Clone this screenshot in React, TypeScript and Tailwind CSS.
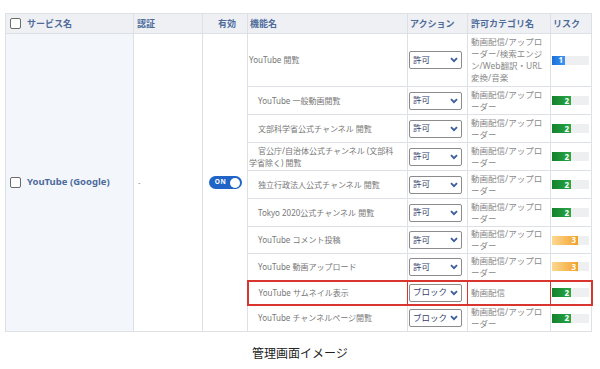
import React from "react";

type Row = {
  name: React.ReactNode;
  indent: boolean;
  cat: string[];
  action: string;
  risk: 1 | 2 | 3;
  h: string;
  hl?: boolean;
};

const rows: Row[] = [
  { name: "YouTube 閲覧", indent: false, cat: ["動画配信/アップロ", "ーダー/検索エンジ", "ン/Web翻訳・URL", "変換/音楽"], action: "許可", risk: 1, h: "h-[53px]" },
  { name: "YouTube 一般動画閲覧", indent: true, cat: ["動画配信/アップロ", "ーダー"], action: "許可", risk: 2, h: "h-[28px]" },
  { name: "文部科学省公式チャンネル 閲覧", indent: true, cat: ["動画配信/アップロ", "ーダー"], action: "許可", risk: 2, h: "h-[28px]" },
  {
    name: (
      <>
        官公庁/自治体公式チャンネル (文部科
        <br />
        学省除く) 閲覧
      </>
    ),
    indent: true,
    cat: ["動画配信/アップロ", "ーダー"],
    action: "許可",
    risk: 2,
    h: "h-[28px]",
  },
  { name: "独立行政法人公式チャンネル 閲覧", indent: true, cat: ["動画配信/アップロ", "ーダー"], action: "許可", risk: 2, h: "h-[28px]" },
  { name: "Tokyo 2020公式チャンネル 閲覧", indent: true, cat: ["動画配信/アップロ", "ーダー"], action: "許可", risk: 2, h: "h-[28px]" },
  { name: "YouTube コメント投稿", indent: true, cat: ["動画配信/アップロ", "ーダー"], action: "許可", risk: 3, h: "h-[27px]" },
  { name: "YouTube 動画アップロード", indent: true, cat: ["動画配信/アップロ", "ーダー"], action: "許可", risk: 3, h: "h-[27px]" },
  { name: "YouTube サムネイル表示", indent: true, cat: ["動画配信"], action: "ブロック", risk: 2, h: "h-[24px]", hl: true },
  { name: "YouTube チャンネルページ閲覧", indent: true, cat: ["動画配信/アップロ", "ーダー"], action: "ブロック", risk: 2, h: "h-[27px]" },
];

function Checkbox() {
  return <span className="inline-block w-[11px] h-[11px] border border-[#6b6b6b] rounded-[2px] bg-white align-middle shrink-0" />;
}

function Select({ value }: { value: string }) {
  return (
    <div className="flex items-center justify-between w-[53px] h-[18px] border border-[#8c8c8c] rounded-[2px] bg-white pl-[3px] pr-[3px]">
      <span className="text-[8.5px] text-[#33406b] leading-none whitespace-nowrap">{value}</span>
      <svg width="8" height="6" viewBox="0 0 8 6" className="shrink-0">
        <path d="M1 1.2 L4 4.2 L7 1.2" fill="none" stroke="#3c5a9c" strokeWidth="1.8" />
      </svg>
    </div>
  );
}

function Risk({ level }: { level: 1 | 2 | 3 }) {
  const bar =
    level === 1
      ? "w-[13px] bg-linear-to-r from-[#1b6fd9] to-[#3d95f0]"
      : level === 2
      ? "w-[19px] bg-linear-to-r from-[#12822b] to-[#2aa748]"
      : "w-[26px] bg-linear-to-r from-[#fcd88e] to-[#f2a11c]";
  return (
    <div className="w-[37px] h-[9px] bg-[#eeeff1] flex">
      <div className={`${bar} h-full flex items-center justify-end pr-[2px]`}>
        <span className="text-[8px] font-bold text-white leading-none">{level}</span>
      </div>
    </div>
  );
}

export default function App() {
  const cell = "border border-[#dde0e5]";
  const head = "border border-[#dde0e5] bg-[#eef0f3] text-[9px] font-bold text-[#4e6b9b] h-[20px] align-middle";
  return (
    <div className="w-[600px] h-[369px] bg-white pt-[13px] px-[5px]" style={{ fontFamily: '"Noto Sans", "Noto Sans CJK JP", sans-serif' }}>
      <table className="table-fixed border-collapse w-[586px]">
        <colgroup>
          <col className="w-[128px]" />
          <col className="w-[69px]" />
          <col className="w-[45px]" />
          <col className="w-[160px]" />
          <col className="w-[60px]" />
          <col className="w-[83px]" />
          <col className="w-[41px]" />
        </colgroup>
        <thead>
          <tr>
            <th className={`${head} text-left pl-[4px]`}>
              <div className="flex items-center gap-[6px]">
                <Checkbox />
                <span>サービス名</span>
              </div>
            </th>
            <th className={`${head} text-left pl-[3px]`}>認証</th>
            <th className={`${head} text-center pl-[4px]`}>有効</th>
            <th className={`${head} text-left pl-[2px]`}>機能名</th>
            <th className={`${head} text-left pl-[2px]`}>アクション</th>
            <th className={`${head} text-left pl-[3px]`}>許可カテゴリ名</th>
            <th className={`${head} text-left pl-[2px]`}>リスク</th>
          </tr>
        </thead>
        <tbody>
          {rows.map((r, i) => {
            const hl = r.hl ? "!border-y-2 !border-[#d8352f]" : "";
            return (
              <tr key={i} className={r.h}>
                {i === 0 && (
                  <>
                    <td rowSpan={rows.length} className={`${cell} bg-[#f3f6fb] pl-[4px] align-middle`}>
                      <div className="flex items-center gap-[6px]">
                        <Checkbox />
                        <span className="text-[9.5px] font-bold text-[#4e6b9b]">YouTube (Google)</span>
                      </div>
                    </td>
                    <td rowSpan={rows.length} className={`${cell} pl-[4px] align-middle text-[8px] text-[#999]`}>
                      -
                    </td>
                    <td rowSpan={rows.length} className={`${cell} align-middle`}>
                      <div className="flex justify-center pl-[1px]">
                        <div className="w-[33px] h-[13px] rounded-full bg-[#1f64c6] flex items-center justify-between pl-[6px] pr-[2px]">
                          <span className="text-[6.5px] font-bold text-white leading-none tracking-[0.5px]">ON</span>
                          <span className="w-[10px] h-[10px] rounded-full bg-white" />
                        </div>
                      </div>
                    </td>
                  </>
                )}
                <td
                  className={`${cell} ${hl} ${r.hl ? "!border-l-2" : ""} pl-[1px] align-middle text-[8px] leading-[12px] text-[#777] whitespace-nowrap ${
                    r.indent ? "indent-[9px]" : ""
                  }`}
                >
                  {r.name}
                </td>
                <td className={`${cell} ${hl} pl-[1px] align-middle`}>
                  <Select value={r.action} />
                </td>
                <td className={`${cell} ${hl} pl-[3px] align-middle text-[8.5px] leading-[12px] text-[#8a8a8a] whitespace-nowrap`}>
                  {r.cat.map((c, j) => (
                    <div key={j}>{c}</div>
                  ))}
                </td>
                <td className={`${cell} ${hl} ${r.hl ? "!border-r-2" : ""} pl-[1px] align-middle`}>
                  <Risk level={r.risk} />
                </td>
              </tr>
            );
          })}
        </tbody>
      </table>
      <div className="mt-[13px] text-center text-[12px] leading-[16px] text-[#222]" style={{ fontFamily: '"Noto Sans CJK JP", sans-serif' }}>
        管理画面イメージ
      </div>
    </div>
  );
}
